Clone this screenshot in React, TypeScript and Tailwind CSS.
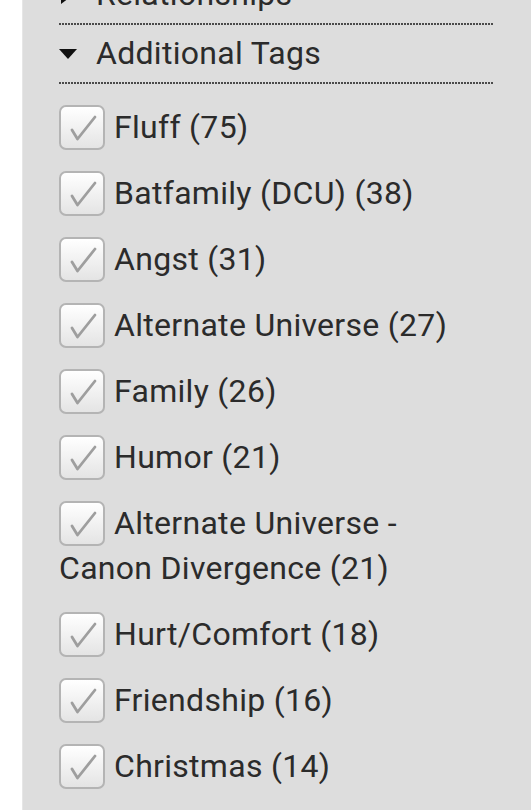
import React from "react";

const tags = [
  "Fluff (75)",
  "Batfamily (DCU) (38)",
  "Angst (31)",
  "Alternate Universe (27)",
  "Family (26)",
  "Humor (21)",
  "Alternate Universe - Canon Divergence (21)",
  "Hurt/Comfort (18)",
  "Friendship (16)",
  "Christmas (14)",
];

const Dots = () => (
  <div className="h-[2px] w-full bg-[linear-gradient(to_right,#4a4a4a_2px,transparent_2px)] bg-[length:3px_2px]" />
);

const Tick = () => (
  <span className="inline-block align-top mr-[9px] h-[45px] w-[46px] rounded-[7px] border-2 border-[#b4b4b4] bg-[linear-gradient(to_bottom,#ffffff,#e4e4e4)]">
    <svg viewBox="0 0 42 41" className="h-full w-full">
      <path
        d="M11 23 L16.5 32 L34 10"
        fill="none"
        stroke="#9e9e9e"
        strokeWidth="2.8"
        strokeLinecap="round"
        strokeLinejoin="round"
      />
    </svg>
  </span>
);

const Heading: React.FC<{ label: string; open?: boolean }> = ({ label, open }) => (
  <div className="flex items-center h-[57px]">
    <svg viewBox="0 0 18 18" className="w-[18px] h-[18px] mr-[19px]">
      {open ? (
        <path d="M0 4 L18 4 L9 14 Z" fill="#111" />
      ) : (
        <path d="M2 0 L14 9 L2 18 Z" fill="#111" />
      )}
    </svg>
    <span>{label}</span>
  </div>
);

export default function App() {
  return (
    <div className="min-h-[810px] bg-white pl-[22px] overflow-hidden font-['Roboto',sans-serif] text-[32px] leading-[45px] tracking-[0.3px] text-[#2b2b2b]">
      <div className="min-h-[810px] bg-[#dddddd] pl-[36px] pr-[38px] border-l border-[#e6e6e6]">
        <div className="-mt-[34px]">
          <Heading label="Relationships" />
        </div>
        <Dots />
        <Heading label="Additional Tags" open />
        <Dots />
        <ul className="pt-[21px] pb-[20px]">
          {tags.map((t) => (
            <li key={t} className="mb-[21px] pr-[40px]">
              <Tick />
              {t}
            </li>
          ))}
        </ul>
      </div>
    </div>
  );
}
